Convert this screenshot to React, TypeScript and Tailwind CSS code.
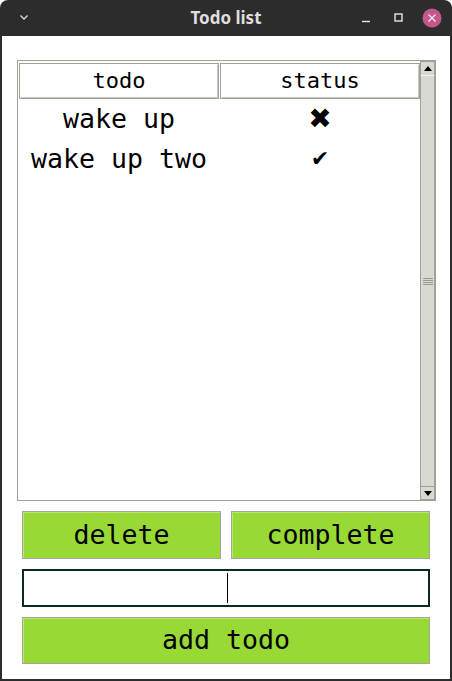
import React from "react";

const mono = { fontFamily: '"DejaVu Sans Mono", "Liberation Mono", monospace' };

const todos = [
  { text: "wake up", done: false },
  { text: "wake up two", done: true },
];

function TitleBar() {
  return (
    <div className="relative flex h-[36px] items-center justify-center rounded-t-[8px] bg-[#2c2c2c]">
      <svg className="absolute left-[19px] top-[13px]" width="10" height="8" viewBox="0 0 10 8">
        <path d="M1.5 2.5 L5 6 L8.5 2.5" fill="none" stroke="#dcdcdc" strokeWidth="1.3" />
      </svg>
      <span
        className="text-[17px] font-bold text-[#dedede]"
        style={{ fontFamily: '"Noto Sans", "DejaVu Sans", sans-serif' }}
      >
        Todo list
      </span>
      <div className="absolute right-[10px] top-[8px] flex items-center">
        <svg width="20" height="20" viewBox="0 0 20 20">
          <path d="M5 13.5 H13" stroke="#e6e6e6" strokeWidth="1.4" />
        </svg>
        <svg className="ml-[12px]" width="20" height="20" viewBox="0 0 20 20">
          <rect x="6" y="6" width="7" height="7" fill="none" stroke="#e6e6e6" strokeWidth="1.4" />
        </svg>
        <svg className="ml-[13px]" width="20" height="20" viewBox="0 0 20 20">
          <circle cx="10" cy="10" r="9.5" fill="#c4578c" />
          <path d="M6.5 6.5 L13.5 13.5 M13.5 6.5 L6.5 13.5" stroke="#f6e6ee" strokeWidth="1.3" />
        </svg>
      </div>
    </div>
  );
}

function Scrollbar() {
  return (
    <div className="flex w-[15px] flex-col bg-[#d9d9d4]">
      <div className="flex h-[15px] items-center justify-center border border-[#a29f99] border-b-[#f2f2f0]">
        <svg width="8" height="5" viewBox="0 0 8 5">
          <path d="M0 5 L4 0 L8 5 Z" fill="#000" />
        </svg>
      </div>
      <div className="flex flex-1 flex-col items-center justify-center border-x border-[#a29f99]">
        <div className="flex w-[10px] flex-col gap-[1px]">
          <div className="h-[1px] bg-[#9c9993]" />
          <div className="h-[1px] bg-[#9c9993]" />
          <div className="h-[1px] bg-[#9c9993]" />
          <div className="h-[1px] bg-[#9c9993]" />
        </div>
      </div>
      <div className="flex h-[14px] items-center justify-center border border-[#a29f99]">
        <svg width="8" height="5" viewBox="0 0 8 5">
          <path d="M0 0 L4 5 L8 0 Z" fill="#000" />
        </svg>
      </div>
    </div>
  );
}

function TodoTable() {
  return (
    <div className="ml-[15px] mr-[14px] flex h-[441px] border border-[#a29f99] bg-white">
      <div className="flex-1 pl-[1px] pt-[2px]">
        <div className="grid grid-cols-[200px_200px] gap-x-[1px]">
          {["todo", "status"].map((h) => (
            <div
              key={h}
              className="flex h-[36px] items-center justify-center border border-[#a29f99] text-[22px] leading-none text-black shadow-[inset_1px_1px_0_#fff,inset_-1px_-1px_0_#c8c6c2]"
              style={mono}
            >
              {h}
            </div>
          ))}
          {todos.map((t) => (
            <React.Fragment key={t.text}>
              <div className="flex h-[40px] items-center justify-center text-[26.6px] leading-none text-black" style={mono}>
                {t.text}
              </div>
              <div
                className={`flex h-[40px] items-center justify-center leading-none text-black ${t.done ? "text-[22px]" : "text-[28px]"}`}
                style={{ fontFamily: '"DejaVu Sans", sans-serif' }}
              >
                {t.done ? "✔" : "✖"}
              </div>
            </React.Fragment>
          ))}
        </div>
      </div>
      <Scrollbar />
    </div>
  );
}

function GreenButton({ label, className }: { label: string; className?: string }) {
  return (
    <button
      className={`flex items-center justify-center border border-[#a5a59d] bg-[#99d936] text-[26.6px] leading-none text-black shadow-[inset_1px_1px_0_#b9e86a] ${className ?? ""}`}
      style={mono}
    >
      {label}
    </button>
  );
}

export default function App() {
  return (
    <div className="flex h-[681px] w-[452px] flex-col bg-white">
      <TitleBar />
      <div className="flex flex-1 flex-col border-x-2 border-b-2 border-[#2c2c2c] pt-[24px]">
        <TodoTable />
        <div className="mx-[20px] mt-[10px] flex gap-[10px]">
          <GreenButton label="delete" className="h-[48px] flex-1" />
          <GreenButton label="complete" className="h-[48px] flex-1" />
        </div>
        <div className="relative mx-[20px] mt-[10px] h-[38px] border-2 border-[#0b2a20] bg-white">
          <div className="absolute left-[203px] top-[2px] h-[30px] w-[1px] bg-black" />
        </div>
        <div className="mx-[20px] mt-[10px] flex">
          <GreenButton label="add todo" className="h-[47px] flex-1" />
        </div>
      </div>
    </div>
  );
}
